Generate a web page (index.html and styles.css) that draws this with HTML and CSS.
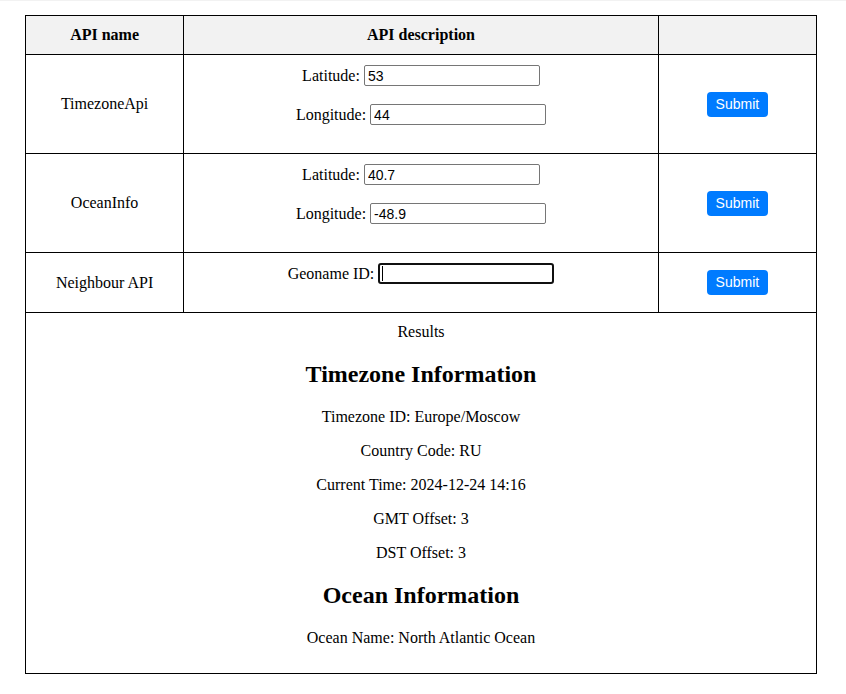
FILE: index.html
```html
<!DOCTYPE html>
<html lang="en">
<head>
<meta charset="utf-8">
<title>API Explorer</title>
<link rel="stylesheet" href="styles.css">
</head>
<body>
<table class="api-table">
  <thead>
    <tr>
      <th class="col-name">API name</th>
      <th class="col-desc">API description</th>
      <th class="col-action"></th>
    </tr>
  </thead>
  <tbody>
    <tr>
      <td>TimezoneApi</td>
      <td class="form-cell">Latitude: <input class="field" type="text" value="53"><br><br>Longitude: <input class="field" type="text" value="44"><br><br></td>
      <td><button class="submit" type="button">Submit</button></td>
    </tr>
    <tr>
      <td>OceanInfo</td>
      <td class="form-cell">Latitude: <input class="field" type="text" value="40.7"><br><br>Longitude: <input class="field" type="text" value="-48.9"><br><br></td>
      <td><button class="submit" type="button">Submit</button></td>
    </tr>
    <tr>
      <td>Neighbour API</td>
      <td class="form-cell">Geoname ID: <span class="caret-wrap"><input class="field field-focused" type="text" value=""></span><br><br></td>
      <td><button class="submit" type="button">Submit</button></td>
    </tr>
    <tr>
      <td colspan="3" class="results">
        Results
        <h2>Timezone Information</h2>
        <p>Timezone ID: Europe/Moscow</p>
        <p>Country Code: RU</p>
        <p>Current Time: 2024-12-24 14:16</p>
        <p>GMT Offset: 3</p>
        <p>DST Offset: 3</p>
        <h2>Ocean Information</h2>
        <p>Ocean Name: North Atlantic Ocean</p>
      </td>
    </tr>
  </tbody>
</table>
</body>
</html>
```

FILE: styles.css
```css
html {
  border-top: 1px solid #f2f2f2;
  background: #ffffff;
}

body {
  margin: 8px;
  font-family: "Liberation Serif", "Times New Roman", serif;
  font-size: 16px;
  color: #000;
}

.api-table {
  width: 792px;
  margin: 6px 0 0 17px;
  border-collapse: collapse;
}

.api-table th,
.api-table td {
  border: 1px solid #000;
  padding: 10px;
  text-align: center;
  vertical-align: middle;
}

.api-table th {
  background: #f2f2f2;
  font-weight: bold;
}

.col-name,
.col-action {
  width: 20%;
}

.col-desc {
  width: 60%;
}

.field {
  box-sizing: border-box;
  width: 176px;
  height: 21px;
  padding: 1px 3px;
  border: 1px solid #767676;
  border-radius: 2px;
  font-family: "Liberation Sans", Arial, sans-serif;
  font-size: 14px;
  color: #000;
  background: #fff;
  vertical-align: baseline;
}

.caret-wrap {
  position: relative;
  display: inline-block;
}

.caret-wrap::after {
  content: "";
  position: absolute;
  left: 4px;
  top: 3px;
  width: 1px;
  height: 15px;
  background: #000;
}

.field-focused {
  border: 2px solid #101010;
  border-radius: 3px;
  padding: 0 2px;
}

.submit {
  background: #007bff;
  color: #fff;
  border: none;
  border-radius: 4px;
  font-family: "Liberation Sans", Arial, sans-serif;
  font-size: 14px;
  line-height: 17px;
  padding: 4px 9px;
  cursor: pointer;
}

.results h2 {
  font-size: 24px;
  margin: 20px 0;
}

.results p {
  margin: 16px 0;
}
```
